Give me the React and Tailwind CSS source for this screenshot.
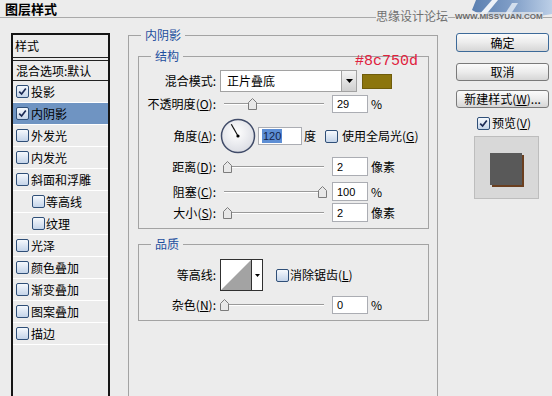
import clsx from "clsx";

// left list of layer effects
const effects = [
    { name: '投影', checked: true },
    { name: '内阴影', checked: true, active: true },
    { name: '外发光' },
    { name: '内发光' },
    { name: '斜面和浮雕' },
    { name: '等高线', sub: true },
    { name: '纹理', sub: true },
    { name: '光泽' },
    { name: '颜色叠加' },
    { name: '渐变叠加' },
    { name: '图案叠加' },
    { name: '描边' },
];

const Check = ({ checked }) => (
    <span className="flex h-[13px] w-[13px] shrink-0 items-center justify-center rounded-[2px] border border-[#2f4f78] bg-linear-to-b from-[#f6f9fd] to-[#c4d4e9]">
        {checked && (
            <svg width="9" height="9" viewBox="0 0 9 9">
                <path d="M1.2 4.6 L3.6 7 L7.8 1.6" fill="none" stroke="#1b2a55" strokeWidth="1.7" />
            </svg>
        )}
    </span>
);

// "(O)" style access key, letter underlined
const Key = ({ k }) => (
    <>
        (<span className="underline underline-offset-1">{k}</span>)
    </>
);

const Slider = ({ left }) => (
    <div className="relative h-[12px] w-[108px]">
        <div className="absolute left-[4px] right-[4px] top-[5px] h-[2px] border-t border-b border-t-[#9a9a9a] border-b-white" />
        <svg className="absolute top-0" style={{ left }} width="9" height="12" viewBox="0 0 9 12">
            <path d="M0.5 4.5 L4.5 0.5 L8.5 4.5 V11.5 H0.5 Z" fill="#e8e8e8" stroke="#7c7c7c" />
        </svg>
    </div>
);

const Field = ({ value }) => (
    <div className="flex h-full w-[36px] items-center border border-[#abadb3] bg-white pl-[4px] font-['Liberation_Sans',sans-serif] text-[11px]">
        {value}
    </div>
);

const Label = ({ children }) => (
    <span className="w-[78px] shrink-0 pr-[1px] text-right">{children}</span>
);

const SliderRow = ({ label, left, value, unit, className }) => (
    <div className={clsx("flex items-center", className)}>
        <Label>{label}</Label>
        <span className="ml-[3px]">
            <Slider left={left} />
        </span>
        <span className="ml-[4px] h-full">
            <Field value={value} />
        </span>
        <span className="ml-[3px]">{unit}</span>
    </div>
);

const Button = ({ children, primary, className }) => (
    <button
        className={clsx(
            "flex w-full items-center justify-center rounded-[3px] border bg-linear-to-b from-[#fbfbfb] via-[#ececec] to-[#d6d6d6] leading-none",
            primary ? "border-[#3d6a99]" : "border-[#7a7a7a]",
            className
        )}
    >
        {children}
    </button>
);

const App = () => {
    return (
        <div className="relative h-[396px] w-[552px] overflow-hidden bg-[#ececec] font-['Noto_Sans_CJK_SC','Liberation_Sans',sans-serif] text-[12px] leading-[14px] text-black">
            {/* title bar */}
            <div className="relative flex h-[18px] items-center border-b border-[#a9a9a9] pl-[5px]">
                <span className="text-[13px] font-bold">图层样式</span>
                <svg className="absolute right-0 top-0" width="82" height="18" viewBox="0 0 82 18">
                    <defs>
                        <linearGradient id="wm" x1="0" y1="0" x2="1" y2="0">
                            <stop offset="0" stopColor="#5b7fb0" />
                            <stop offset="0.5" stopColor="#809ec7" />
                            <stop offset="1" stopColor="#bccfe7" />
                        </linearGradient>
                    </defs>
                    <path d="M6 0 H82 V14 Q60 18 30 17 Q10 16 2 10 Z" fill="url(#wm)" />
                    <path d="M22 0 L28 0 L14 17 L8 16 Z" fill="#eef2f8" />
                    <path d="M42 3 L48 3 L39 17 L33 17 Z" fill="#e6edf6" opacity="0.8" />
                </svg>
                <div className="absolute left-[376px] top-[9px] flex items-center">
                    <span className="bg-[#ececec] text-[#707070]">思缘设计论坛</span>
                    <span className="ml-[7px] bg-[#ececec]/70 font-['Liberation_Sans',sans-serif] text-[8px] font-bold leading-[9px] text-[#6a6a6a]">
                        WWW.MISSYUAN.COM
                    </span>
                </div>
            </div>

            <div className="flex items-start">
                {/* effects list */}
                <div className="ml-[11px] mt-[15px] h-[380px] w-[99px] border-2 border-[#151515]">
                    <div className="flex h-[23px] items-center border-b border-[#222] pl-[2px]">样式</div>
                    <div className="mt-[2px] flex h-[21px] items-center border-y border-[#222] pl-[3px]">混合选项:默认</div>
                    {effects.map((fx) => (
                        <div
                            key={fx.name}
                            className={clsx(
                                "flex h-[22px] items-center border-b border-white",
                                fx.active && "bg-[#6f94c2]",
                                fx.sub ? "gap-[1px] pl-[19px]" : "gap-[2px] pl-[3px]"
                            )}
                        >
                            <Check checked={fx.checked} />
                            <span>{fx.name}</span>
                        </div>
                    ))}
                </div>

                {/* inner shadow settings */}
                <fieldset className="ml-[18px] mt-[10px] h-[400px] w-[310px] border border-[#a3a3a3]">
                    <legend className="ml-[12px] px-[4px] text-[#1e4f9e]">内阴影</legend>

                    <fieldset className="ml-[9px] mt-[7px] w-[291px] border border-[#a3a3a3] pb-[6px]">
                        <legend className="ml-[12px] px-[4px] text-[#1e4f9e]">结构</legend>

                        <div className="mt-[7px] flex h-[22px] items-center">
                            <Label>混合模式:</Label>
                            <div className="ml-[3px] flex h-[22px] w-[137px] items-center border border-[#a2a2a2] bg-white">
                                <span className="flex-1 pl-[6px]">正片叠底</span>
                                <span className="flex h-full w-[15px] items-center justify-center border-l border-[#a2a2a2] bg-linear-to-b from-[#f4f4f4] to-[#cfcfcf]">
                                    <svg width="7" height="4" viewBox="0 0 7 4">
                                        <path d="M0 0 H7 L3.5 4 Z" fill="#000" />
                                    </svg>
                                </span>
                            </div>
                            <span className="ml-[5px] h-[15px] w-[30px] border border-[#6f5c0a] bg-[#8c750d]" />
                        </div>

                        <SliderRow className="mt-[3px] h-[18px]" label={<>不透明度<Key k="O" />:</>} left={28} value="29" unit="%" />

                        <div className="mt-[5px] flex h-[36px] items-center">
                            <Label>角度<Key k="A" />:</Label>
                            <svg className="ml-[3px]" width="36" height="36" viewBox="0 0 36 36">
                                <defs>
                                    <radialGradient id="dial" cx="45%" cy="40%" r="65%">
                                        <stop offset="0" stopColor="#ffffff" />
                                        <stop offset="1" stopColor="#d9dbe2" />
                                    </radialGradient>
                                </defs>
                                <circle cx="18" cy="18" r="16.5" fill="url(#dial)" stroke="#414c69" strokeWidth="1.5" />
                                <line x1="18" y1="18" x2="11.3" y2="6.2" stroke="#111" strokeWidth="1.2" />
                                <circle cx="18" cy="18" r="1.6" fill="#000" />
                            </svg>
                            <div className="ml-[2px] flex h-[18px] w-[44px] items-center border border-[#abadb3] bg-white pl-[3px] font-['Liberation_Sans',sans-serif] text-[11px]">
                                <span className="bg-[#5d8ed4] px-[1px] text-[#14244a]">120</span>
                            </div>
                            <span className="ml-[2px]">度</span>
                            <span className="ml-[9px]">
                                <Check />
                            </span>
                            <span className="ml-[4px]">使用全局光<Key k="G" /></span>
                        </div>

                        <SliderRow className="mt-[3px] h-[19px]" label={<>距离<Key k="D" />:</>} left={3} value="2" unit="像素" />
                        <SliderRow className="mt-[6px] h-[19px]" label={<>阻塞<Key k="C" />:</>} left={98} value="100" unit="%" />
                        <SliderRow className="mt-[2px] h-[19px]" label={<>大小<Key k="S" />:</>} left={3} value="2" unit="像素" />
                    </fieldset>

                    <fieldset className="ml-[9px] mt-[8px] w-[291px] border border-[#a3a3a3] pb-[6px]">
                        <legend className="ml-[12px] px-[4px] text-[#1e4f9e]">品质</legend>

                        <div className="mt-[8px] flex h-[32px] items-center">
                            <Label>等高线:</Label>
                            <div className="ml-[3px] flex h-[32px] w-[43px] border border-[#303030] bg-white">
                                <svg width="30" height="30" viewBox="0 0 30 30">
                                    <polygon points="0,30 30,0 30,30" fill="#a3a3a3" />
                                </svg>
                                <span className="flex flex-1 items-center justify-center border-l border-[#303030]">
                                    <svg width="5" height="3" viewBox="0 0 5 3">
                                        <path d="M0 0 H5 L2.5 3 Z" fill="#000" />
                                    </svg>
                                </span>
                            </div>
                            <span className="ml-[13px]">
                                <Check />
                            </span>
                            <span className="ml-[1px]">消除锯齿<Key k="L" /></span>
                        </div>

                        <SliderRow className="mt-[5px] h-[18px]" label={<>杂色<Key k="N" />:</>} left={0} value="0" unit="%" />
                    </fieldset>
                </fieldset>

                {/* buttons + preview */}
                <div className="ml-[18px] mt-[15px] flex w-[93px] flex-col">
                    <Button primary className="h-[19px]">确定</Button>
                    <Button className="mt-[11px] h-[18px]">取消</Button>
                    <Button className="mt-[9px] h-[18px]">新建样式<Key k="W" />...</Button>
                    <div className="mt-[8px] flex h-[14px] items-center gap-[2px] pl-[21px]">
                        <Check checked />
                        <span>预览<Key k="V" /></span>
                    </div>
                    <div className="ml-[18px] mt-[6px] h-[63px] w-[65px] border border-[#bdbdbd] bg-[#d8d8d8] pl-[15px] pt-[16px]">
                        <div className="h-[32px] w-[32px] bg-[#595959] shadow-[2px_2px_0_#6b3f1f]" />
                    </div>
                </div>
            </div>

            {/* colour annotation over the panel */}
            <span className="absolute left-[355px] top-[54px] font-['Liberation_Mono',monospace] text-[15px] leading-[15px] text-[#e0203c]">
                #8c750d
            </span>
        </div>
    );
};

export default App;
